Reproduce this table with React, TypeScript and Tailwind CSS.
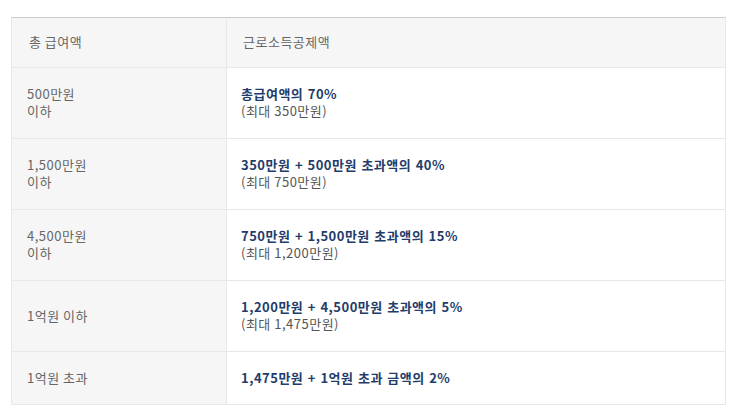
import React from "react";

type Row = {
  range: string[];
  main: string;
  sub?: string;
  h: string;
};

const rows: Row[] = [
  { range: ["500만원", "이하"], main: "총급여액의 70%", sub: "(최대 350만원)", h: "h-[71px]" },
  { range: ["1,500만원", "이하"], main: "350만원 + 500만원 초과액의 40%", sub: "(최대 750만원)", h: "h-[71px]" },
  { range: ["4,500만원", "이하"], main: "750만원 + 1,500만원 초과액의 15%", sub: "(최대 1,200만원)", h: "h-[71px]" },
  { range: ["1억원 이하"], main: "1,200만원 + 4,500만원 초과액의 5%", sub: "(최대 1,475만원)", h: "h-[71px]" },
  { range: ["1억원 초과"], main: "1,475만원 + 1억원 초과 금액의 2%", h: "h-[53px]" },
];

const App: React.FC = () => {
  return (
    <div className="w-[748px] h-[419px] bg-white pt-[17px] pl-[11px] font-['Noto_Sans_CJK_KR','Noto_Sans',sans-serif] text-[13px] leading-[17px] tracking-[0.5px]">
      <div className="w-[715px] border-t border-t-[#cccccc] border-x border-x-[#e8e8e8]">
        {/* Header */}
        <div className="flex h-[50px] bg-[#f6f6f6] border-b border-[#e8e8e8] text-[#666]">
          <div className="w-[215px] flex items-center pl-[17px] pb-[2px] border-r border-[#e8e8e8]">총 급여액</div>
          <div className="flex-1 flex items-center pl-[16px] pb-[2px]">근로소득공제액</div>
        </div>

        {/* Body rows */}
        {rows.map((r, i) => (
          <div key={i} className={`flex ${r.h} border-b border-[#e8e8e8]`}>
            <div className="w-[215px] bg-[#f6f6f6] border-r border-[#e8e8e8] flex flex-col justify-center pl-[15px] pb-[2px] text-[#666]">
              {r.range.map((t) => (
                <span key={t}>{t}</span>
              ))}
            </div>
            <div className="flex-1 flex flex-col justify-center pl-[14px] pb-[2px]">
              <span className="font-bold text-[#1f3d6b] [word-spacing:1px]">{r.main}</span>
              {r.sub && <span className="text-[#555]">{r.sub}</span>}
            </div>
          </div>
        ))}
      </div>
    </div>
  );
};

export default App;
